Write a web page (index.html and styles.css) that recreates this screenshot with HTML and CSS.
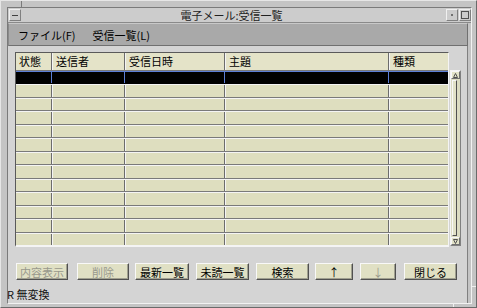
FILE: index.html
```html
<!DOCTYPE html>
<html lang="ja">
<head>
    <meta charset="UTF-8">
    <title>電子メール:受信一覧</title>
    <link rel="stylesheet" href="styles.css">
</head>
<body>
    <div class="window">
        <span class="mark mark-top"></span>
        <span class="mark mark-bottom"></span>
        <span class="mark mark-right"></span>
        <div class="client">
            <div class="titlebar">
                <span class="tbtn tbtn-menu"><i></i></span>
                <span class="title">電子メール:受信一覧</span>
                <span class="tbtn tbtn-min"><i></i></span>
                <span class="tbtn tbtn-max"><i></i></span>
            </div>
            <div class="menubar">
                <span>ファイル(F)</span>
                <span>受信一覧(L)</span>
            </div>
            <div class="main">
                <div class="listarea">
                    <div class="table">
                        <div class="row head">
                            <div class="cell">状態</div>
                            <div class="cell">送信者</div>
                            <div class="cell">受信日時</div>
                            <div class="cell">主題</div>
                            <div class="cell">種類</div>
                        </div>
                        <div class="body">
                            <div class="row selected"><div class="cell"></div><div class="cell"></div><div class="cell"></div><div class="cell"></div><div class="cell"></div></div>
                            <div class="row"><div class="cell"></div><div class="cell"></div><div class="cell"></div><div class="cell"></div><div class="cell"></div></div>
                            <div class="row"><div class="cell"></div><div class="cell"></div><div class="cell"></div><div class="cell"></div><div class="cell"></div></div>
                            <div class="row"><div class="cell"></div><div class="cell"></div><div class="cell"></div><div class="cell"></div><div class="cell"></div></div>
                            <div class="row"><div class="cell"></div><div class="cell"></div><div class="cell"></div><div class="cell"></div><div class="cell"></div></div>
                            <div class="row"><div class="cell"></div><div class="cell"></div><div class="cell"></div><div class="cell"></div><div class="cell"></div></div>
                            <div class="row"><div class="cell"></div><div class="cell"></div><div class="cell"></div><div class="cell"></div><div class="cell"></div></div>
                            <div class="row"><div class="cell"></div><div class="cell"></div><div class="cell"></div><div class="cell"></div><div class="cell"></div></div>
                            <div class="row"><div class="cell"></div><div class="cell"></div><div class="cell"></div><div class="cell"></div><div class="cell"></div></div>
                            <div class="row"><div class="cell"></div><div class="cell"></div><div class="cell"></div><div class="cell"></div><div class="cell"></div></div>
                            <div class="row"><div class="cell"></div><div class="cell"></div><div class="cell"></div><div class="cell"></div><div class="cell"></div></div>
                            <div class="row"><div class="cell"></div><div class="cell"></div><div class="cell"></div><div class="cell"></div><div class="cell"></div></div>
                            <div class="row last"><div class="cell"></div><div class="cell"></div><div class="cell"></div><div class="cell"></div><div class="cell"></div></div>
                        </div>
                    </div>
                    <div class="scrollbar">
                        <div class="arrow arrow-up">
                            <svg width="5" height="5" viewBox="0 0 5 5"><path d="M2.5 0.5 L4.5 4.5 L0.5 4.5 Z" fill="none" stroke="#505050" stroke-width="1"/></svg>
                        </div>
                        <div class="track"><div class="thumb"></div></div>
                        <div class="arrow arrow-down">
                            <svg width="5" height="5" viewBox="0 0 5 5"><path d="M0.5 0.5 L4.5 0.5 L2.5 4.5 Z" fill="none" stroke="#505050" stroke-width="1"/></svg>
                        </div>
                    </div>
                </div>
                <div class="buttons">
                    <button class="btn w52 disabled">内容表示</button>
                    <button class="btn w52 gap9 disabled">削除</button>
                    <button class="btn w54">最新一覧</button>
                    <button class="btn w53 gap7">未読一覧</button>
                    <button class="btn w53 gap7">検索</button>
                    <button class="btn w38">↑</button>
                    <button class="btn w36 gap7 disabled">↓</button>
                    <button class="btn w53 gap8">閉じる</button>
                </div>
                <div class="status">R 無変換</div>
            </div>
        </div>
    </div>
</body>
</html>
```

FILE: styles.css
```css
* {
    box-sizing: border-box;
}
html, body {
    margin: 0;
    padding: 0;
}
body {
    font-family: "Noto Sans CJK JP", "Liberation Sans", sans-serif;
    font-size: 11px;
    color: #000;
    background: #c4c4c4;
}
.window {
    position: relative;
    width: 477px;
    height: 308px;
    background: #c4c4c4;
    border: 1px solid;
    border-color: #e6e6e6 #6a6a6a #6a6a6a #e6e6e6;
    padding: 6px 4px 3px 6px;
}
.mark {
    position: absolute;
    background: #7a7a7a;
}
.mark-top {
    left: 20px;
    top: 0;
    width: 1px;
    height: 6px;
}
.mark-bottom {
    left: 452px;
    bottom: 0;
    width: 1px;
    height: 4px;
    background: #f0f0f0;
}
.mark-right {
    right: 0;
    top: 285px;
    width: 4px;
    height: 1px;
    background: #f0f0f0;
}
.client {
    height: 100%;
    display: flex;
    flex-direction: column;
    background: #c4c4c4;
    border: 1px solid;
    border-color: #7a7a7a #f2f2f2 #f2f2f2 #7a7a7a;
}
.titlebar {
    height: 15px;
    display: flex;
    align-items: center;
    background: #cccccc;
    border-bottom: 1px solid #8a8a8a;
    padding: 0 0 0 1px;
}
.title {
    flex: 1;
    text-align: center;
    line-height: 13px;
    color: #202020;
    padding-left: 0;
    padding-right: 4px;
}
.tbtn {
    width: 12px;
    height: 12px;
    display: flex;
    align-items: center;
    justify-content: center;
    border: 1px solid;
    border-color: #f0f0f0 #808080 #808080 #f0f0f0;
    background: #cccccc;
}
.tbtn-menu i {
    display: block;
    width: 6px;
    height: 1px;
    background: #404040;
}
.tbtn-min i {
    display: block;
    width: 2px;
    height: 2px;
    background: #707070;
}
.tbtn-max {
    margin-left: 1px;
}
.tbtn-max i {
    display: block;
    width: 8px;
    height: 8px;
    border: 1px solid #505050;
}
.menubar {
    height: 23px;
    display: flex;
    align-items: center;
    gap: 17px;
    padding-left: 9px;
    margin-right: 3px;
    background: #a9a9a9;
    border: 1px solid;
    border-color: #c8c8c8 #707070 #707070 #8a8a8a;
}
.main {
    flex: 1;
    background: #d4d4d4;
    margin-right: 3px;
    border-right: 1px solid #808080;
    padding: 6px 0 0 7px;
}
.listarea {
    display: flex;
    gap: 1px;
}
.table {
    width: 434px;
    border: 1px solid;
    border-color: #5a5a5a #f4f4f4 #f4f4f4 #5a5a5a;
    border-bottom-width: 2px;
    background: #dedebf;
}
.row {
    display: grid;
    grid-template-columns: 36px 73px 100px 164px 1fr;
}
.cell {
    border-right: 1px solid #6c6c6c;
}
.cell:last-child {
    border-right: none;
}
.row .cell + .cell {
    border-left: 1px solid #f4f4f4;
}
.head {
    height: 18px;
    background: #e4e3c8;
    border-bottom: 1px solid #7a7a7a;
}
.head .cell {
    line-height: 16px;
    padding-left: 3px;
}
.body {
    height: 174px;
    display: flex;
    flex-direction: column;
}
.body .row {
    flex: 1;
    border-bottom: 1px solid #7a7a7a;
    border-top: 1px solid #f4f4f4;
}
.body .row.last {
    border-bottom: none;
}
.row.selected {
    background: #000;
    border-top: 1px solid #5c7fd6;
    border-bottom: 1px solid #000;
}
.row.selected .cell {
    border-right-color: #5c7fd6;
}
.row.selected .cell + .cell {
    border-left-color: #000;
}
.scrollbar {
    width: 11px;
    margin-top: 18px;
    height: 176px;
    display: flex;
    flex-direction: column;
    background: #dcdcc2;
    border: 1px solid;
    border-color: #f4f4f4 #808080 #808080 #f4f4f4;
}
.arrow {
    height: 8px;
    display: flex;
    align-items: center;
    justify-content: center;
    background: #e2e2c8;
    border: 1px solid;
    border-color: #f8f8f8 #707070 #707070 #f8f8f8;
}
.track {
    flex: 1;
    padding: 1px 2px 1px 1px;
}
.thumb {
    height: 100%;
    width: 5px;
    background: #e2e2c8;
    border: 1px solid;
    border-color: #f8f8f8 #505050 #505050 #f8f8f8;
}
.buttons {
    display: flex;
    gap: 6px;
    margin-top: 16px;
    padding-left: 1px;
}
.btn {
    height: 17px;
    padding: 0;
    font-family: inherit;
    font-size: 11px;
    line-height: 14px;
    color: #000;
    background: #e0e0c4;
    border: 1px solid;
    border-color: #f8f8f8 #505050 #505050 #f8f8f8;
    box-shadow: inset -1px -1px 0 #a0a090;
}
.btn.disabled {
    color: #98988c;
}
.w52 { width: 52px; }
.w54 { width: 54px; }
.w53 { width: 53px; }
.w38 { width: 38px; }
.w36 { width: 36px; }
.gap9 { margin-left: 3px; }
.gap7 { margin-left: 1px; }
.gap8 { margin-left: 2px; }
.status {
    margin-top: 7px;
    margin-left: -8px;
    line-height: 14px;
    color: #101010;
}
```
